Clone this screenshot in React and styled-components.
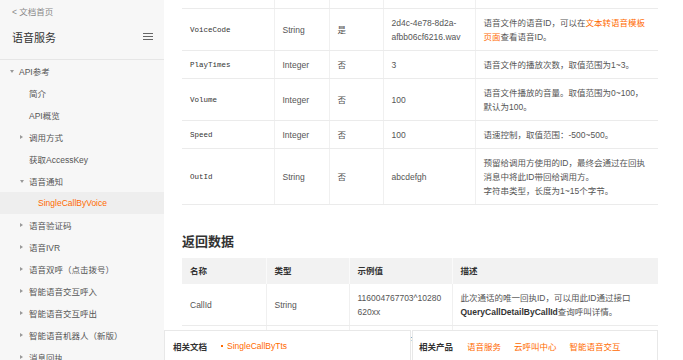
import React from "react";
import styled, { createGlobalStyle } from "styled-components";

const GlobalStyle = createGlobalStyle`
  html, body {
    margin: 0;
    padding: 0;
    background: #fff;
  }
  body {
    font-family: "Liberation Sans", "Noto Sans CJK SC", sans-serif;
    color: #555;
  }
`;

const navItems = [
  { label: "API参考", level: 0, caret: "open" },
  { label: "简介", level: 1 },
  { label: "API概览", level: 1 },
  { label: "调用方式", level: 1, caret: "closed" },
  { label: "获取AccessKey", level: 1 },
  { label: "语音通知", level: 1, caret: "open" },
  { label: "SingleCallByVoice", level: 2, active: true },
  { label: "语音验证码", level: 1, caret: "closed" },
  { label: "语音IVR", level: 1, caret: "closed" },
  { label: "语音双呼（点击拨号）", level: 1, caret: "closed" },
  { label: "智能语音交互呼入", level: 1, caret: "closed" },
  { label: "智能语音交互呼出", level: 1, caret: "closed" },
  { label: "智能语音机器人（新版）", level: 1, caret: "closed" },
  { label: "消息回执", level: 1, caret: "closed" },
];

const indents = [10, 20, 29];

// 描述里带链接/换行, 所以渲染时再生成
const getParams = () => [
  {
    name: "VoiceCode",
    type: "String",
    required: "是",
    example: "2d4c-4e78-8d2a-afbb06cf6216.wav",
    desc: (
      <>
        语音文件的语音ID，可以在<Link>文本转语音模板页面</Link>查看语音ID。
      </>
    ),
  },
  { name: "PlayTimes", type: "Integer", required: "否", example: "3", desc: "语音文件的播放次数，取值范围为1~3。" },
  { name: "Volume", type: "Integer", required: "否", example: "100", desc: "语音文件播放的音量。取值范围为0~100，默认为100。" },
  { name: "Speed", type: "Integer", required: "否", example: "100", desc: "语速控制，取值范围：-500~500。" },
  {
    name: "OutId",
    type: "String",
    required: "否",
    example: "abcdefgh",
    desc: (
      <>
        预留给调用方使用的ID，最终会通过在回执消息中将此ID带回给调用方。
        <br />
        字符串类型，长度为1~15个字节。
      </>
    ),
  },
];

const App = () => {
  const params = getParams();

  return (
    <>
      <GlobalStyle />
      <Page>
        <Sidebar>
          <BackLink>&lt; 文档首页</BackLink>
          <TitleRow>
            <Title>语音服务</Title>
            <Hamburger>
              <span />
              <span />
              <span />
            </Hamburger>
          </TitleRow>
          <NavList>
            {navItems.map((item) => (
              <NavItem key={item.label} $indent={indents[item.level]} $active={item.active}>
                <CaretSlot>{item.caret && <Caret $open={item.caret === "open"} />}</CaretSlot>
                {item.label}
              </NavItem>
            ))}
          </NavList>
        </Sidebar>

        <Main>
          <Table>
            <colgroup>
              <col style={{ width: 92 }} />
              <col style={{ width: 55 }} />
              <col style={{ width: 54 }} />
              <col style={{ width: 92 }} />
              <col style={{ width: 183 }} />
            </colgroup>
            <tbody>
              <tr>
                <StubCell />
                <StubCell />
                <StubCell />
                <StubCell />
                <StubCell />
              </tr>
              {params.map((p) => (
                <tr key={p.name}>
                  <Td $mono>{p.name}</Td>
                  <Td>{p.type}</Td>
                  <Td>{p.required}</Td>
                  <Td>{p.example}</Td>
                  <Td>{p.desc}</Td>
                </tr>
              ))}
            </tbody>
          </Table>

          <SectionTitle>返回数据</SectionTitle>

          <Table>
            <colgroup>
              <col style={{ width: 84 }} />
              <col style={{ width: 83 }} />
              <col style={{ width: 103 }} />
              <col style={{ width: 206 }} />
            </colgroup>
            <thead>
              <tr>
                <Th>名称</Th>
                <Th>类型</Th>
                <Th>示例值</Th>
                <Th>描述</Th>
              </tr>
            </thead>
            <tbody>
              <tr>
                <Td>CallId</Td>
                <Td>String</Td>
                <Td $breakAll>116004767703^10280620xx</Td>
                <Td>
                  此次通话的唯一回执ID，可以用此ID通过接口
                  <Strong>QueryCallDetailByCallId</Strong>查询呼叫详情。
                </Td>
              </tr>
              <tr>
                <Td>RequestId</Td>
                <Td>String</Td>
                <Td>D9CB3933-9FE3-4870</Td>
                <Td>请求ID。</Td>
              </tr>
            </tbody>
          </Table>
        </Main>

        <RelatedBar>
          <RelatedBox $width={247} $pad={8}>
            <RelatedLabel>相关文档</RelatedLabel>
            <RelatedLink $dot>SingleCallByTts</RelatedLink>
          </RelatedBox>
          <RelatedBox $pad={6}>
            <RelatedLabel>相关产品</RelatedLabel>
            <RelatedLink>语音服务</RelatedLink>
            <RelatedLink>云呼叫中心</RelatedLink>
            <RelatedLink>智能语音交互</RelatedLink>
          </RelatedBox>
        </RelatedBar>
      </Page>
    </>
  );
};

export default App;

const Page = styled.div`
  position: relative;
  width: 683px;
  height: 360px;
  display: flex;
  overflow: hidden;
`;

const Sidebar = styled.aside`
  width: 164px;
  flex-shrink: 0;
  background: #f7f7f7;
  display: flex;
  flex-direction: column;
  overflow: hidden;

  & > * {
    flex-shrink: 0;
  }
`;

const BackLink = styled.div`
  padding: 6px 0 0 12px;
  height: 12px;
  font-size: 8.5px;
  line-height: 12px;
  color: #888;
`;

const TitleRow = styled.div`
  height: 42px;
  box-sizing: border-box;
  padding: 0 11px 4px 12px;
  display: flex;
  align-items: center;
  justify-content: space-between;
  border-bottom: 1px solid #e6e6e6;
`;

const Title = styled.div`
  font-size: 11px;
  color: #333;
`;

const Hamburger = styled.div`
  width: 10px;
  display: flex;
  flex-direction: column;
  gap: 2px;

  span {
    display: block;
    height: 1.2px;
    background: #666;
  }
`;

const NavList = styled.nav`
  display: flex;
  flex-direction: column;
`;

const NavItem = styled.div`
  height: 22px;
  flex-shrink: 0;
  display: flex;
  align-items: center;
  padding-left: ${(p) => p.$indent}px;
  font-size: 8.5px;
  color: ${(p) => (p.$active ? "#ff6a00" : "#555")};
  background: ${(p) => (p.$active ? "#eeeeee" : "transparent")};
  white-space: nowrap;
`;

const CaretSlot = styled.span`
  width: 9px;
  flex-shrink: 0;
  display: flex;
  align-items: center;
`;

const Caret = styled.span`
  width: 0;
  height: 0;
  border-style: solid;
  border-color: transparent;
  ${(p) =>
    p.$open
      ? `border-width: 3px 2.5px 0 2.5px; border-top-color: #999;`
      : `border-width: 2.5px 0 2.5px 3px; border-left-color: #999;`}
`;

const Main = styled.main`
  flex: 1;
  padding: 0 25px 0 18px;
`;

const Table = styled.table`
  width: 476px;
  table-layout: fixed;
  border-collapse: collapse;
  font-size: 8.5px;
  line-height: 14px;
  color: #555;
`;

const Td = styled.td`
  padding: 7px 8px 6px;
  vertical-align: middle;
  border-bottom: 1px solid #ebebeb;
  border-left: 1px solid #f0f0f0;
  font-family: ${(p) =>
    p.$mono ? `"Liberation Mono", "Noto Sans CJK SC", monospace` : "inherit"};
  font-size: ${(p) => (p.$mono ? "7.5px" : "inherit")};
  color: ${(p) => (p.$mono ? "#333" : "inherit")};
  word-break: ${(p) => (p.$breakAll ? "break-all" : "normal")};

  &:first-child {
    border-left: none;
  }
`;

const StubCell = styled.td`
  height: 8px;
  padding: 0;
  border-bottom: 1px solid #ebebeb;
  border-left: 1px solid #f0f0f0;

  &:first-child {
    border-left: none;
  }
`;

const Th = styled.th`
  padding: 6px 8px;
  text-align: left;
  font-weight: bold;
  color: #333;
  background: #f2f2f2;
  border-left: 1px solid #fafafa;

  &:first-child {
    border-left: none;
  }
`;

const SectionTitle = styled.h2`
  margin: 28px 0 7px;
  font-size: 13px;
  line-height: 18px;
  font-weight: bold;
  color: #333;
`;

const Link = styled.span`
  color: #ff6a00;
`;

const Strong = styled.b`
  color: #333;
`;

const RelatedBar = styled.div`
  position: absolute;
  left: 164px;
  bottom: 0;
  width: 494px;
  height: 30px;
  display: flex;
  gap: 1px;
`;

const RelatedBox = styled.div`
  ${(p) => (p.$width ? `width: ${p.$width}px;` : "flex: 1;")}
  box-sizing: border-box;
  background: #fff;
  border: 1px solid #e8e8e8;
  border-bottom: none;
  display: flex;
  align-items: center;
  gap: 13px;
  padding: 0 8px 0 ${(p) => p.$pad}px;
  font-size: 8.5px;
`;

const RelatedLabel = styled.span`
  font-weight: bold;
  color: #333;
  margin-right: 1px;
`;

const RelatedLink = styled.span`
  color: #ff6a00;
  display: flex;
  align-items: center;

  ${(p) =>
    p.$dot &&
    `&::before {
      content: "";
      width: 2px;
      height: 2px;
      background: #ff6a00;
      margin-right: 4px;
    }`}
`;
